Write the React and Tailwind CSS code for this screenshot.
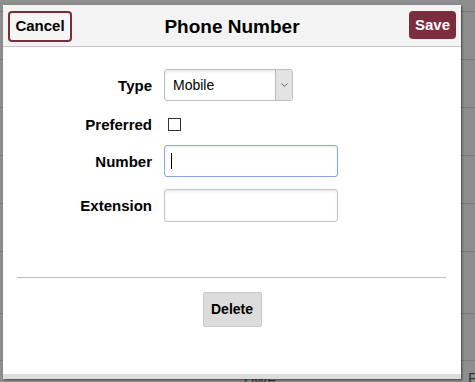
// Phone number edit dialog over a dimmed page
const font = { fontFamily: '"Liberation Sans", Arial, sans-serif' };

function Row({ label, children, className = '' }) {
  return (
    <div className={`flex items-center ${className}`}>
      <div className="w-[149px] text-right text-[15px] font-bold text-black leading-none">{label}</div>
      <div className="ml-3 flex items-center">{children}</div>
    </div>
  );
}

export default function App() {
  return (
    <div style={font} className="relative h-[382px] w-[475px] overflow-hidden bg-[#8e8e8e]">
      {/* page behind the overlay */}
      <div className="flex flex-col">
        <div className="h-[12px] border-b border-[#7b7b7b]" />
        {[0, 1, 2, 3, 4].map(i => (
          <div key={i} className="h-[48px] border-b border-[#7b7b7b]" />
        ))}
        <div className="h-[62px] border-b border-[#7b7b7b]" />
        <div className="h-[47px] border-b border-[#7b7b7b]" />
      </div>
      <div className="absolute left-[244px] top-[374px] text-[14px] leading-none text-[#3a3a3a]">DWE</div>
      <div className="absolute left-[468px] top-[370px] text-[15px] leading-none text-[#333]">F</div>

      {/* dialog */}
      <div className="absolute left-[3px] top-[5px] flex h-[374px] w-[458px] flex-col bg-white shadow-[1px_1px_2px_rgba(0,0,0,0.55)]">
        <div className="relative flex h-[42px] items-start justify-between border-b border-[#c6c6c6] bg-[#f3f3f3] px-[5px] pt-[6px]">
          <button className="h-[31px] w-[64px] rounded-[4px] border-2 border-[#7a2d3d] bg-[#f5f5f5] text-[15px] font-bold text-black">
            Cancel
          </button>
          <div className="absolute inset-x-0 top-[8px] text-center text-[19px] font-bold text-black">Phone Number</div>
          <button className="relative h-[28px] w-[47px] rounded-[4px] bg-[#7b2c3d] text-[15px] font-bold text-white">
            Save
          </button>
        </div>

        <div className="flex flex-1 flex-col pt-[22px]">
          <Row label="Type">
            <div className="flex h-[32px] w-[129px] overflow-hidden rounded-[3px] border border-[#bdbdbd] bg-white shadow-[inset_0_2px_3px_rgba(0,0,0,0.08)]">
              <div className="flex flex-1 items-center pl-[8px] text-[14px] text-black">Mobile</div>
              <div className="flex w-[17px] items-center justify-center border-l border-[#b8b8b8] bg-[#e3e3e3]">
                <svg width="7" height="4" viewBox="0 0 7 4" fill="none" stroke="#555" strokeWidth="0.9">
                  <path d="M0.5 0.5 L3.5 3.3 L6.5 0.5" />
                </svg>
              </div>
            </div>
          </Row>
          <Row label="Preferred" className="mt-[12px] h-[22px]">
            <div className="ml-[4px] h-[13px] w-[13px] border border-[#333] bg-white" />
          </Row>
          <Row label="Number" className="mt-[10px]">
            <div className="flex h-[32px] w-[174px] items-center rounded-[3px] border border-[#8aa4e4] bg-white pl-[6px] shadow-[inset_0_2px_3px_rgba(0,0,0,0.06)]">
              <div className="h-[16px] w-px bg-black" />
            </div>
          </Row>
          <Row label="Extension" className="mt-[12px]">
            <div className="h-[33px] w-[174px] rounded-[3px] border border-[#c4c4c4] bg-white shadow-[inset_0_2px_3px_rgba(0,0,0,0.07)]" />
          </Row>

          <div className="mx-[14px] mt-[55px] mr-[15px] border-t border-[#bdbdbd]" />
          <div className="mt-[14px] flex justify-center">
            <button className="h-[35px] w-[59px] rounded-[2px] border border-[#c8c8c8] bg-[#dcdcdc] text-[14px] font-bold text-black">
              Delete
            </button>
          </div>
        </div>
        <div className="h-[5px] bg-[#dcdcdc]" />
      </div>
    </div>
  );
}
